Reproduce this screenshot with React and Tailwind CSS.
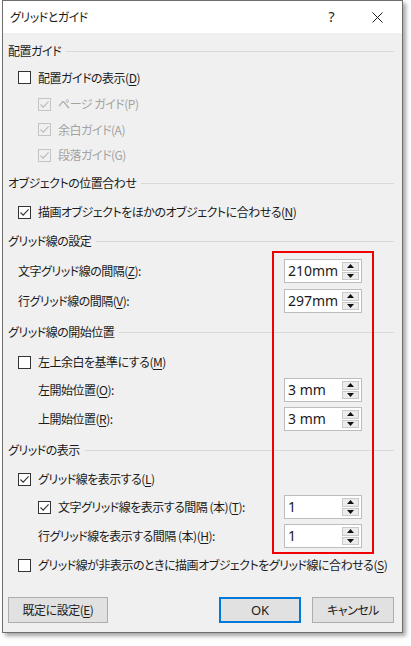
import React from "react";

function K({ t, k, after = "" }) {
  return (
    <span>
      {t}(<span className="underline underline-offset-2">{k}</span>){after}
    </span>
  );
}

function Box({ checked, disabled }) {
  const stroke = disabled ? "#b9b9b9" : "#333333";
  return (
    <span
      className={`flex h-[13px] w-[13px] shrink-0 items-center justify-center border ${
        disabled ? "border-[#c4c4c4] bg-[#f0f0f0]" : "border-[#333333] bg-white"
      }`}
    >
      {checked && (
        <svg width="11" height="11" viewBox="0 0 11 11">
          <path d="M1.5 5.5 L4.2 8.2 L9.6 2.4" fill="none" stroke={stroke} strokeWidth="1.1" />
        </svg>
      )}
    </span>
  );
}

function Heading({ children, h }) {
  return (
    <div className={`flex items-center pl-[5px] pr-[8px] ${h}`}>
      <span>{children}</span>
      <span className="ml-[5px] h-px flex-1 bg-[#d9d9d9]" />
    </div>
  );
}

function Spin({ value }) {
  return (
    <div className="flex h-[24px] w-[78px] shrink-0 border border-[#bdbdbd] bg-white tracking-normal">
      <div className="flex flex-1 items-center pl-[3px] font-['Noto_Sans',sans-serif] text-[14px] text-[#1a1a1a]">
        {value}
      </div>
      <div className="flex w-[19px] flex-col gap-px p-[2px] pl-0">
        <div className="flex flex-1 items-center justify-center border border-[#c9c9c9] bg-[#ececec]">
          <svg width="7" height="4" viewBox="0 0 7 4">
            <path d="M0 4 L3.5 0 L7 4 Z" fill="#111" />
          </svg>
        </div>
        <div className="flex flex-1 items-center justify-center border border-[#c9c9c9] bg-[#ececec]">
          <svg width="7" height="4" viewBox="0 0 7 4">
            <path d="M0 0 L7 0 L3.5 4 Z" fill="#111" />
          </svg>
        </div>
      </div>
    </div>
  );
}

function SpinRow({ label, value, h, indent }) {
  return (
    <div className={`flex items-center pr-[40px] ${indent} ${h}`}>
      <span className="flex-1 whitespace-nowrap">{label}</span>
      <Spin value={value} />
    </div>
  );
}

function CheckRow({ checked, disabled, label, h, indent }) {
  return (
    <div className={`flex items-center gap-[7px] whitespace-nowrap ${indent} ${h} ${disabled ? "text-[#a3a3a3]" : ""}`}>
      <Box checked={checked} disabled={disabled} />
      <span>{label}</span>
    </div>
  );
}

export default function App() {
  return (
    <div className="h-[646px] w-[411px] bg-white pl-[2px] font-['Noto_Sans_CJK_JP',sans-serif] text-[12px] leading-none tracking-[-0.5px] text-[#1b1b1b] [font-feature-settings:'palt']">
      <div className="relative flex h-[633px] w-[401px] flex-col border border-[#6e6e6e] bg-[#f0f0f0] shadow-[3px_3px_4px_rgba(0,0,0,0.35)]">
        <div className="flex h-[32px] items-center bg-white pl-[7px] pr-[19px]">
          <span className="flex-1">グリッドとガイド</span>
          <span className="mr-[38px] font-['Noto_Sans',sans-serif] text-[14px]">?</span>
          <svg width="11" height="11" viewBox="0 0 11 11">
            <path d="M0.5 0.5 L10.5 10.5 M10.5 0.5 L0.5 10.5" stroke="#222" strokeWidth="1" />
          </svg>
        </div>

        <div className="flex flex-1 flex-col pt-[5px]">
          <Heading h="h-[26px]">配置ガイド</Heading>
          <CheckRow indent="pl-[15px]" h="h-[27px]" label={<K t="配置ガイドの表示" k="D" />} />
          <CheckRow indent="pl-[35px]" h="h-[26px]" checked disabled label="ページ ガイド(P)" />
          <CheckRow indent="pl-[35px]" h="h-[25px]" checked disabled label="余白ガイド(A)" />
          <CheckRow indent="pl-[35px]" h="h-[26px]" checked disabled label="段落ガイド(G)" />

          <Heading h="h-[30px]">オブジェクトの位置合わせ</Heading>
          <CheckRow indent="pl-[15px]" h="h-[28px]" checked label={<K t="描画オブジェクトをほかのオブジェクトに合わせる" k="N" />} />

          <Heading h="h-[30px]">グリッド線の設定</Heading>
          <SpinRow indent="pl-[15px]" h="h-[30px]" label={<K t="文字グリッド線の間隔" k="Z" after=":" />} value="210mm" />
          <SpinRow indent="pl-[15px]" h="h-[30px]" label={<K t="行グリッド線の間隔" k="V" after=":" />} value="297mm" />

          <Heading h="h-[32px]">グリッド線の開始位置</Heading>
          <CheckRow indent="pl-[15px]" h="h-[28px]" label={<K t="左上余白を基準にする" k="M" />} />
          <SpinRow indent="pl-[35px]" h="h-[28px]" label={<K t="左開始位置" k="O" after=":" />} value="3 mm" />
          <SpinRow indent="pl-[35px]" h="h-[30px]" label={<K t="上開始位置" k="R" after=":" />} value="3 mm" />

          <Heading h="h-[32px]">グリッドの表示</Heading>
          <CheckRow indent="pl-[15px]" h="h-[26px]" checked label={<K t="グリッド線を表示する" k="L" />} />
          <div className="flex h-[30px] items-center pl-[35px] pr-[40px]">
            <div className="flex flex-1 items-center gap-[7px] whitespace-nowrap">
              <Box checked />
              <K t="文字グリッド線を表示する間隔 (本)" k="T" after=":" />
            </div>
            <Spin value="1" />
          </div>
          <SpinRow indent="pl-[35px]" h="h-[28px]" label={<K t="行グリッド線を表示する間隔 (本)" k="H" after=":" />} value="1" />
          <CheckRow indent="pl-[15px]" h="h-[30px]" label={<K t="グリッド線が非表示のときに描画オブジェクトをグリッド線に合わせる" k="S" />} />

          <div className="mt-[17px] flex h-[26px] gap-[11px] pl-[5px] pr-[8px]">
            <button className="flex h-full w-[100px] items-center justify-center border border-[#adadad] bg-[#e1e1e1]">
              <K t="既定に設定" k="E" />
            </button>
            <button className="ml-auto flex h-full w-[82px] items-center justify-center border-2 border-[#0078d7] bg-[#e1e1e1] font-['Noto_Sans',sans-serif] text-[13px] tracking-normal">
              OK
            </button>
            <button className="flex h-full w-[82px] items-center justify-center border border-[#adadad] bg-[#e1e1e1]">
              キャンセル
            </button>
          </div>
        </div>

        <div className="absolute left-[269px] top-[250px] h-[303px] w-[102px] border-2 border-[#f00000]" />
      </div>
    </div>
  );
}
